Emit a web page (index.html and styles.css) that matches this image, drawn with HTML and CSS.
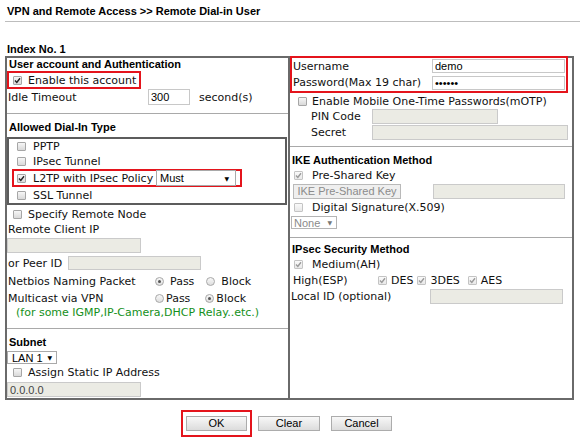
FILE: index.html
```html
<!DOCTYPE html>
<html>
    <head>
        <meta charset="utf-8">
        <title>Remote Dial-in User</title>
        <link rel="stylesheet" href="styles.css">
    </head>
    <body>
        <div class="page-title">VPN and Remote Access &gt;&gt; Remote Dial-in User</div>
        <div class="index-no">Index No. 1</div>

        <div class="panel">
            <!-- left column -->
            <div class="col col-left">
                <div class="sec sec-auth">
                    <div class="head head-first">User account and Authentication</div>
                    <div class="mark mark-enable">
                        <span class="cb"><svg viewBox="0 0 7 7" width="7" height="7"><path d="M1 3.6 L2.8 5.4 L6 1.3" fill="none" stroke="#222" stroke-width="1.4"/></svg></span>Enable this account
                    </div>
                    <div class="row">
                        <span class="lbl lbl-idle">Idle Timeout</span>
                        <input class="txt txt-idle" type="text" value="300">
                        <span class="unit">second(s)</span>
                    </div>
                </div>

                <div class="sec sec-dialin">
                    <div class="head">Allowed Dial-In Type</div>
                    <div class="dialin-box">
                        <div class="row row-first"><span class="cb"></span>PPTP</div>
                        <div class="row"><span class="cb"></span>IPsec Tunnel</div>
                        <div class="mark mark-l2tp">
                            <span class="cb"><svg viewBox="0 0 7 7" width="7" height="7"><path d="M1 3.6 L2.8 5.4 L6 1.3" fill="none" stroke="#222" stroke-width="1.4"/></svg></span>
                            <span class="lbl-l2tp">L2TP with IPsec Policy</span>
                            <span class="sel sel-must"><span>Must</span><span class="arr">▼</span></span>
                        </div>
                        <div class="row"><span class="cb"></span>SSL Tunnel</div>
                    </div>
                    <div class="row row-check row-specify"><span class="cb"></span>Specify Remote Node</div>
                    <div class="row row-short">Remote Client IP</div>
                    <input class="txt txt-wide txt-rcip" type="text" disabled>
                    <div class="row row-peer">
                        <span class="lbl lbl-peer">or Peer ID</span>
                        <input class="txt txt-peer" type="text" disabled>
                    </div>
                    <div class="row row-netbios">
                        <span class="lbl lbl-radio">Netbios Naming Packet</span>
                        <span class="rb on"></span><span class="rtext">Pass</span>
                        <span class="rb rb-second"></span><span class="rtext">Block</span>
                    </div>
                    <div class="row">
                        <span class="lbl lbl-radio">Multicast via VPN</span>
                        <span class="rb"></span><span class="rtext rtext-tight">Pass</span>
                        <span class="rb rb-second-tight on"></span><span class="rtext rtext-tight">Block</span>
                    </div>
                    <div class="note">(for some IGMP,IP-Camera,DHCP Relay..etc.)</div>
                </div>

                <div class="sec sec-subnet">
                    <div class="head">Subnet</div>
                    <span class="sel sel-lan"><span>LAN 1</span><span class="arr">▼</span></span>
                    <div class="row row-check row-assign"><span class="cb"></span>Assign Static IP Address</div>
                    <input class="txt txt-wide txt-ip" type="text" value="0.0.0.0" disabled>
                </div>
            </div>

            <!-- right column -->
            <div class="col col-right">
                <div class="sec sec-user">
                    <div class="mark mark-user">
                        <div class="row">
                            <span class="lbl lbl-right">Username</span>
                            <input class="txt txt-right" type="text" value="demo">
                        </div>
                        <div class="row row-pass">
                            <span class="lbl lbl-right">Password(Max 19 char)</span>
                            <input class="txt txt-right" type="password" value="demo12">
                        </div>
                    </div>
                    <div class="row row-motp"><span class="cb"></span>Enable Mobile One-Time Passwords(mOTP)</div>
                    <div class="row row-pin">
                        <span class="lbl lbl-pin">PIN Code</span>
                        <input class="txt txt-pin" type="text" disabled>
                    </div>
                    <div class="row">
                        <span class="lbl lbl-pin">Secret</span>
                        <input class="txt txt-secret" type="text" disabled>
                    </div>
                </div>

                <div class="sec sec-ike">
                    <div class="head">IKE Authentication Method</div>
                    <div class="row row-psk"><span class="cb cb-off"><svg viewBox="0 0 7 7" width="7" height="7"><path d="M1 3.6 L2.8 5.4 L6 1.3" fill="none" stroke="#9a9a9a" stroke-width="1.4"/></svg></span>Pre-Shared Key</div>
                    <div class="row row-btn">
                        <button class="btn btn-ike" disabled>IKE Pre-Shared Key</button>
                        <input class="txt txt-ike" type="text" disabled>
                    </div>
                    <div class="row row-digital"><span class="cb cb-dim"></span>Digital Signature(X.509)</div>
                    <span class="sel sel-none"><span>None</span><span class="arr">▼</span></span>
                </div>

                <div class="sec sec-ipsec">
                    <div class="head">IPsec Security Method</div>
                    <div class="row row-psk"><span class="cb cb-off"><svg viewBox="0 0 7 7" width="7" height="7"><path d="M1 3.6 L2.8 5.4 L6 1.3" fill="none" stroke="#9a9a9a" stroke-width="1.4"/></svg></span>Medium(AH)</div>
                    <div class="row row-esp">
                        <span class="lbl lbl-esp">High(ESP)</span>
                        <span class="cb cb-off cb-esp"><svg viewBox="0 0 7 7" width="7" height="7"><path d="M1 3.6 L2.8 5.4 L6 1.3" fill="none" stroke="#9a9a9a" stroke-width="1.4"/></svg></span><span class="esp esp-des">DES</span>
                        <span class="cb cb-off cb-esp"><svg viewBox="0 0 7 7" width="7" height="7"><path d="M1 3.6 L2.8 5.4 L6 1.3" fill="none" stroke="#9a9a9a" stroke-width="1.4"/></svg></span><span class="esp esp-3des">3DES</span>
                        <span class="cb cb-off cb-esp"><svg viewBox="0 0 7 7" width="7" height="7"><path d="M1 3.6 L2.8 5.4 L6 1.3" fill="none" stroke="#9a9a9a" stroke-width="1.4"/></svg></span><span class="esp">AES</span>
                    </div>
                    <div class="row">
                        <span class="lbl lbl-right">Local ID (optional)</span>
                        <input class="txt txt-right txt-local" type="text" disabled>
                    </div>
                </div>
            </div>
        </div>

        <div class="actions">
            <div class="mark mark-ok"><button class="btn">OK</button></div>
            <button class="btn btn-clear">Clear</button>
            <button class="btn btn-cancel">Cancel</button>
        </div>
    </body>
</html>
```

FILE: styles.css
```css
body {
    margin: 0;
    font-family: "DejaVu Sans", Verdana, sans-serif;
    font-size: 11px;
    color: #111;
    background: #fff;
}
.page-title {
    margin-left: 5px;
    padding: 4px 0 3px 2px;
    font: bold 11px/14px "Liberation Sans", Arial, sans-serif;
    color: #000;
    border-bottom: 1px solid #bdbdbd;
}
.index-no {
    margin: 20px 0 0 7px;
    font: bold 11px/14px "Liberation Sans", Arial, sans-serif;
    color: #000;
}

/* main two column table */
.panel {
    margin-left: 5px;
    width: 569px;
    box-sizing: border-box;
    display: grid;
    grid-template-columns: 283px 1fr;
    border: 2px solid #6a6a6a;
}
.col-left { border-right: 2px solid #6a6a6a; }
.sec { border-bottom: 1px solid #a9a9a9; }
.sec:last-child { border-bottom: none; }
.sec-auth { padding-bottom: 8px; }

.head {
    height: 14px;
    margin-top: 6px;
    padding-left: 2px;
    font: bold 11px/14px "Liberation Sans", Arial, sans-serif;
    color: #000;
}
.head-first { height: 13px; line-height: 13px; margin-top: 0; }

.row {
    display: flex;
    align-items: center;
    height: 16px;
    padding-left: 1px;
    white-space: nowrap;
}
.lbl { flex: none; }

/* red highlight boxes */
.mark {
    display: flex;
    align-items: center;
    box-sizing: border-box;
    border: 2px solid #e4141c;
    white-space: nowrap;
}
.mark-enable { height: 18px; width: 134px; padding-left: 4px; }
.mark-enable .cb { margin-right: 6px; }

/* checkboxes and radios */
.cb {
    flex: none;
    display: inline-flex;
    align-items: center;
    justify-content: center;
    width: 9px;
    height: 9px;
    box-sizing: border-box;
    border: 1px solid #a6a6a6;
    border-radius: 1px;
    background: linear-gradient(#f6f6f6, #d9d9d9);
}
.cb svg { display: block; }
.cb-off, .cb-dim { border-color: #c4c4c4; background: linear-gradient(#fafafa, #e8e8e8); }
.rb {
    flex: none;
    display: inline-flex;
    align-items: center;
    justify-content: center;
    width: 9px;
    height: 9px;
    box-sizing: border-box;
    border: 1px solid #a8a8a8;
    border-radius: 50%;
    background: linear-gradient(#f8f8f8, #dedede);
}
.rb.on::after {
    content: "";
    width: 3px;
    height: 3px;
    border-radius: 50%;
    background: #555;
}

/* text inputs */
.txt {
    flex: none;
    box-sizing: border-box;
    height: 15px;
    margin: 0;
    padding: 0 2px;
    border: 1px solid #c8c8c8;
    background: #fff;
    font: 11px "Liberation Sans", Arial, sans-serif;
    color: #000;
}
.txt:disabled { background: #ebebe4; border-color: #cacaca; color: #444; }
.txt-idle { width: 42px; height: 16px; }
.unit { margin-left: 9px; }
.lbl-idle { width: 140px; }
.txt-wide { display: block; width: 134px; margin-top: 1px; }
.txt-ip { color: #555; }

/* fake select boxes */
.sel {
    flex: none;
    display: flex;
    align-items: center;
    justify-content: space-between;
    box-sizing: border-box;
    border: 1px solid #a9a9a9;
    background: #fff;
    font: 11px "Liberation Sans", Arial, sans-serif;
    color: #000;
}
.sel .arr { font: 6px "DejaVu Sans", sans-serif; }
.sel-must { width: 80px; height: 16px; padding: 0 6px 0 3px; }
.sel-lan { width: 50px; height: 13px; margin-top: 2px; padding: 0 4px 0 4px; }
.sel-none { width: 46px; height: 13px; margin-left: 1px; padding: 0 4px 0 2px; color: #8a8a8a; border-color: #b4b4b4; }
.sel-none .arr { color: #777; }

/* allowed dial-in */
.dialin-box {
    margin-top: 3px;
    width: 280px;
    box-sizing: border-box;
    border: 2px solid #5c5c5c;
}
.dialin-box .row { padding-left: 8px; }
.dialin-box .row-first { height: 14px; }
.dialin-box .cb { margin-right: 7px; }
.mark-l2tp { height: 18px; width: 230px; margin-left: 3px; padding-left: 3px; }
.mark-l2tp .cb { margin-right: 7px; }
.lbl-l2tp { width: 123px; }

.row-check { padding-left: 6px; }
.row-check .cb { margin-right: 6px; }
.row-specify { margin-top: 1px; }
.row-short { height: 15px; }
.row-peer { margin-top: 2px; }
.lbl-peer { width: 60px; }
.txt-peer { width: 133px; height: 14px; }
.row-netbios { margin-top: 2px; height: 17px; }
.lbl-radio { width: 147px; }
.rtext { margin-left: 6px; }
.rtext-tight { margin-left: 2px; }
.rb-second { margin-left: 12px; }
.rb-second-tight { margin-left: 15px; }
.note {
    height: 13px;
    line-height: 13px;
    padding: 0 0 9px 9px;
    color: #14901a;
    white-space: nowrap;
}
.row-assign { height: 17px; }
.sec-subnet { padding-bottom: 1px; }

/* right column */
.sec-user { padding-bottom: 6px; }
.mark-user {
    display: block;
    margin-top: -2px;
    height: 37px;
    width: 278px;
}
.mark-user .row { padding-left: 1px; }
.row-pass { height: 17px; }
.lbl-right { width: 139px; }
.txt-right { width: 133px; height: 14px; }
.txt-local { height: 15px; }
.row-motp { padding-left: 8px; }
.row-motp .cb { margin-right: 5px; }
.row-pin { height: 15px; }
.lbl-pin { width: 61px; padding-left: 20px; }
.txt-pin { width: 126px; }
.txt-secret { width: 196px; }

.sec-ike { padding-bottom: 8px; }
.row-psk { padding-left: 4px; }
.row-psk .cb { margin-right: 9px; }
.row-btn { padding-left: 3px; }
.txt-ike { width: 132px; margin-left: 32px; }
.row-digital { height: 17px; padding-left: 4px; }
.row-digital .cb { margin-right: 9px; }

.sec-ipsec .head { margin-top: 4px; }
.lbl-esp { width: 85px; padding-left: 2px; }
.cb-esp { margin-right: 4px; }
.esp-des { margin-right: 4px; }
.esp-3des { margin-right: 8px; }

/* buttons */
.btn {
    flex: none;
    box-sizing: border-box;
    height: 15px;
    width: 61px;
    margin: 0;
    padding: 0;
    border: 1px solid #acacac;
    background: linear-gradient(#f8f8f8, #dcdcdc);
    font: 11px/13px "Liberation Sans", Arial, sans-serif;
    color: #000;
}
.btn-ike {
    width: 108px;
    color: #8c8c8c;
    border-color: #b9b9b9;
    background: #efefef;
}
.actions {
    display: flex;
    align-items: center;
    margin-top: 10px;
    padding-left: 181px;
}
.mark-ok { padding: 4px 3px; }
.btn-clear { width: 62px; margin-left: 6px; }
.btn-cancel { margin-left: 11px; }
```
